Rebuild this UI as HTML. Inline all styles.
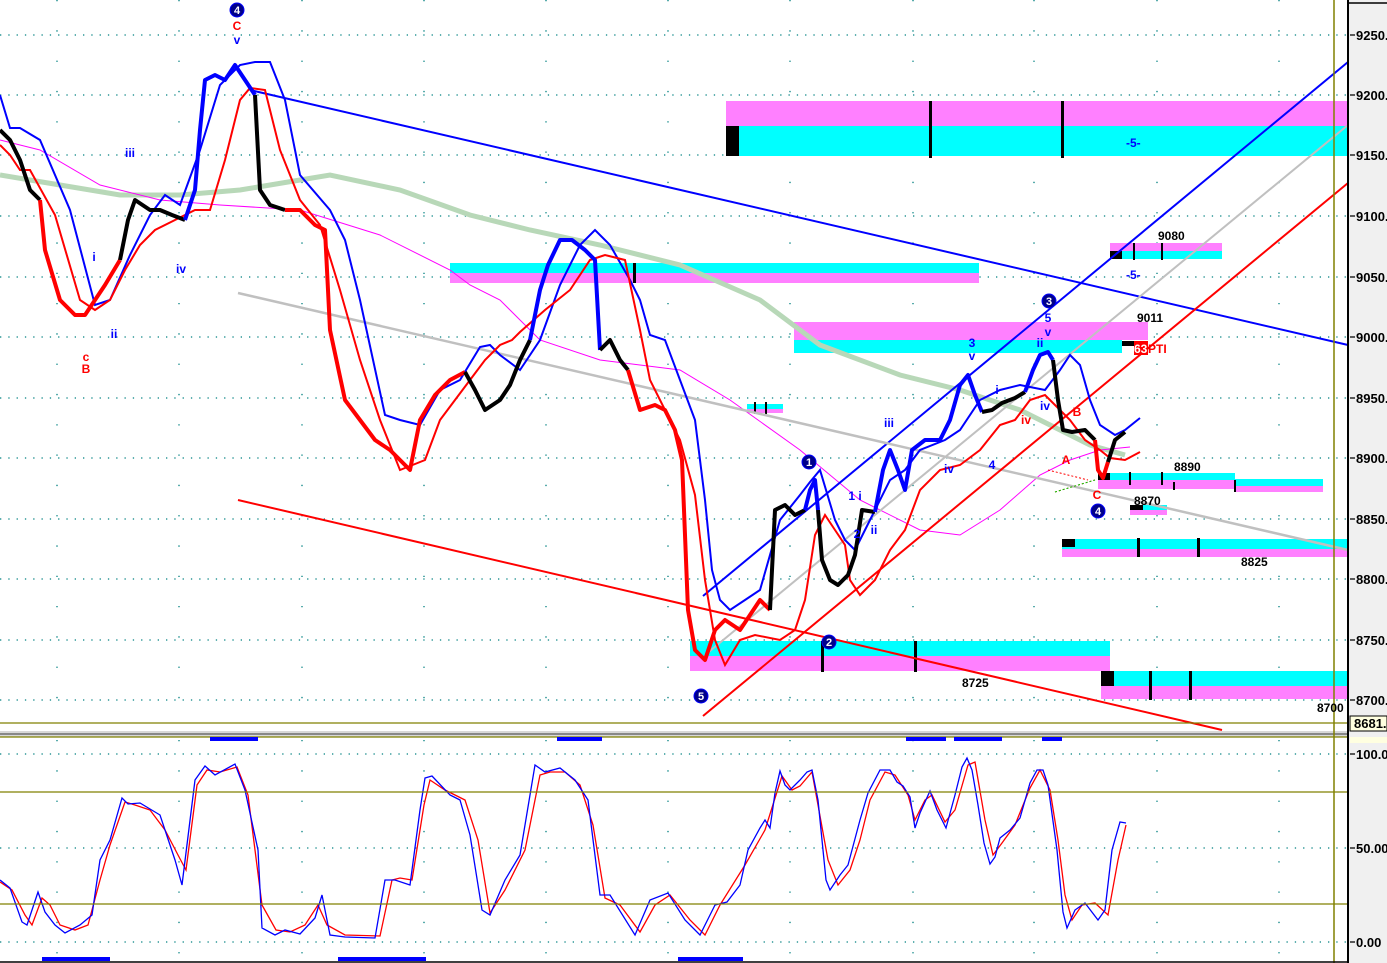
<!DOCTYPE html>
<html><head><meta charset="utf-8"><style>
html,body{margin:0;padding:0;background:#fff;}
svg{display:block;}
text{font-family:"Liberation Sans",Arial,sans-serif;font-weight:bold;}
</style></head><body>
<svg width="1387" height="963" viewBox="0 0 1387 963" xmlns="http://www.w3.org/2000/svg">
<rect width="1387" height="963" fill="#fff"/>
<!-- grid -->
<g stroke="#008080" stroke-width="1.3" stroke-dasharray="1.3 7">
<path d="M0 35H1348M0 95H1348M0 155H1348M0 216H1348M0 277H1348M0 337H1348M0 398H1348M0 458H1348M0 519H1348M0 579H1348M0 640H1348M0 700H1348"/>
<path d="M0 754H1348M0 848H1348M0 942H1348"/>
<path d="M57 0V723M179 0V723M302 0V723M424 0V723M546 0V723M668 0V723M790 0V723M913 0V723M1034 0V723M1157 0V723M1279 0V723" stroke-dasharray="1.3 29"/>
<path d="M57 740V962M179 740V962M302 740V962M424 740V962M546 740V962M668 740V962M790 740V962M913 740V962M1034 740V962M1157 740V962M1279 740V962" stroke-dasharray="1.3 29"/>
</g>
<!-- zones -->
<rect x="726" y="101" width="622" height="25" fill="#ff80ff"/><rect x="726" y="126" width="622" height="30" fill="#00ffff"/>
<rect x="726" y="126" width="13" height="30" fill="#000"/>
<rect x="929" y="101" width="3" height="57" fill="#000"/><rect x="1061" y="101" width="3" height="57" fill="#000"/>
<text x="1126" y="147" font-size="12" fill="#00f" font-weight="normal">-5-</text>
<rect x="450" y="263" width="529" height="10" fill="#00ffff"/><rect x="450" y="273" width="529" height="10" fill="#ff80ff"/>
<rect x="633" y="263" width="3" height="20" fill="#000"/>
<rect x="794" y="322" width="354" height="18" fill="#ff80ff"/><rect x="794" y="340" width="328" height="13" fill="#00ffff"/>
<rect x="1122" y="341" width="13" height="5" fill="#000"/>
<rect x="1110" y="243" width="112" height="8" fill="#ff80ff"/><rect x="1110" y="251" width="112" height="8" fill="#00ffff"/>
<rect x="1110" y="251" width="12" height="8" fill="#000"/><rect x="1133" y="243" width="2" height="17" fill="#000"/><rect x="1161" y="243" width="2" height="17" fill="#000"/>
<rect x="747" y="404" width="36" height="5" fill="#00ffff"/><rect x="747" y="409" width="36" height="4" fill="#ff80ff"/>
<rect x="754" y="402" width="2" height="12" fill="#000"/><rect x="765" y="402" width="2" height="12" fill="#000"/>
<rect x="1098" y="473" width="137" height="7" fill="#00ffff"/><rect x="1098" y="480" width="137" height="9" fill="#ff80ff"/>
<rect x="1235" y="479" width="88" height="7" fill="#00ffff"/><rect x="1235" y="486" width="88" height="6" fill="#ff80ff"/>
<rect x="1098" y="473" width="12" height="7" fill="#000"/><rect x="1129" y="472" width="2" height="13" fill="#000"/><rect x="1161" y="472" width="2" height="13" fill="#000"/><rect x="1173" y="482" width="2" height="8" fill="#000"/><rect x="1234" y="480" width="2" height="12" fill="#000"/>
<rect x="1130" y="505" width="37" height="5" fill="#00ffff"/><rect x="1130" y="510" width="37" height="5" fill="#ff80ff"/><rect x="1130" y="505" width="13" height="5" fill="#000"/>
<rect x="1062" y="539" width="286" height="10" fill="#00ffff"/><rect x="1062" y="549" width="286" height="8" fill="#ff80ff"/><rect x="1062" y="539" width="13" height="8" fill="#000"/>
<rect x="1137" y="538" width="3" height="19" fill="#000"/><rect x="1197" y="538" width="3" height="19" fill="#000"/>
<rect x="690" y="641" width="420" height="15" fill="#00ffff"/><rect x="690" y="656" width="420" height="15" fill="#ff80ff"/>
<rect x="821" y="641" width="3" height="31" fill="#000"/><rect x="914" y="641" width="3" height="31" fill="#000"/>
<rect x="1101" y="671" width="247" height="15" fill="#00ffff"/><rect x="1101" y="686" width="247" height="13" fill="#ff80ff"/><rect x="1101" y="671" width="13" height="15" fill="#000"/>
<rect x="1149" y="671" width="3" height="29" fill="#000"/><rect x="1189" y="671" width="3" height="29" fill="#000"/>
<!-- MAs -->
<polyline fill="none" stroke="#b8d8b8" stroke-width="5" points="0,175 60,185 120,195 180,195 240,190 300,180 330,175 400,190 470,215 530,230 600,245 680,265 760,300 820,345 900,375 960,390 1020,410 1060,430 1090,445 1125,455"/>
<polyline fill="none" stroke="#ff00ff" stroke-width="1" points="0,140 40,150 100,185 160,200 220,205 300,210 380,235 450,270 470,285 500,300 540,340 600,360 680,370 730,400 800,450 860,500 920,530 960,535 1000,510 1040,475 1070,460 1100,450 1130,447"/>
<!-- trend lines -->
<line x1="250" y1="90" x2="1348" y2="345" stroke="#0000ff" stroke-width="2"/>
<line x1="703" y1="596" x2="1348" y2="62" stroke="#0000ff" stroke-width="2"/>
<line x1="238" y1="293" x2="1348" y2="550" stroke="#c0c0c0" stroke-width="2.5"/>
<line x1="705" y1="655" x2="1348" y2="125" stroke="#c0c0c0" stroke-width="2"/>
<line x1="238" y1="500" x2="1222" y2="730" stroke="#ff0000" stroke-width="2"/>
<line x1="703" y1="716" x2="1348" y2="183" stroke="#ff0000" stroke-width="2"/>
<!-- envelopes -->
<polyline fill="none" stroke="#0000ff" stroke-width="2" points="0,95 10,128 20,128 40,140 70,210 95,305 110,300 130,255 150,215 165,195 180,205 200,150 220,85 240,65 255,62 270,62 285,100 300,175 330,210 345,240 360,300 385,415 400,420 420,425 440,390 460,380 480,347 490,345 500,355 520,370 540,340 560,285 580,245 595,230 610,245 630,280 640,300 650,335 665,340 680,380 695,420 705,500 712,570 720,600 730,610 745,600 760,590 780,520 800,495 810,482 820,470 835,520 845,540 855,550 870,520 890,480 905,470 920,450 945,440 960,430 980,400 1000,390 1020,385 1045,390 1060,370 1070,355 1080,365 1090,400 1100,425 1115,435 1125,430 1140,418"/>
<polyline fill="none" stroke="#ff0000" stroke-width="2" points="0,145 10,155 20,170 30,170 55,215 80,300 95,310 110,300 125,270 140,245 155,230 175,220 195,210 210,210 225,160 240,100 250,88 265,90 280,150 300,200 320,225 340,290 360,360 380,420 400,470 425,460 440,420 455,400 470,380 485,360 500,345 512,340 520,332 545,310 570,290 590,260 605,255 625,260 640,330 650,380 670,420 680,440 695,495 705,580 715,640 725,665 740,640 755,635 780,640 795,630 805,600 815,535 825,515 835,530 845,545 850,580 860,595 875,580 890,550 905,530 920,490 940,470 960,465 980,450 1000,425 1015,420 1030,400 1045,395 1055,405 1070,420 1085,440 1100,450 1110,458 1125,460 1140,452"/>
<!-- price -->
<g fill="none" stroke-width="4" stroke-linejoin="round">
<polyline stroke="#000" points="0,130 10,140 20,160 30,190 40,200"/>
<polyline stroke="#f00" points="40,200 45,250 60,300 75,315 85,315 95,300 105,285 120,260"/>
<polyline stroke="#000" points="120,260 128,220 135,200 150,210 160,210 172,215 185,220"/>
<polyline stroke="#00f" points="185,220 195,190 200,130 205,80 215,75 225,80 235,65 245,80 255,95"/>
<polyline stroke="#000" points="255,95 260,190 270,205 285,210"/>
<polyline stroke="#f00" points="285,210 300,210 315,225 325,230 330,330 345,400 360,420 375,440 390,450 400,460 410,470 420,420 435,395 450,380 465,372"/>
<polyline stroke="#000" points="465,372 475,390 485,410 500,400 510,385 520,360 530,340"/>
<polyline stroke="#00f" points="530,340 540,290 548,265 560,240 572,240 585,250 595,260 600,350"/>
<polyline stroke="#000" points="600,350 610,340 620,360 628,370"/>
<polyline stroke="#f00" points="628,370 640,410 655,405 665,410 675,430 682,460 688,610 695,650 705,660 715,630 725,620 740,630 750,615 760,600 770,610"/>
<polyline stroke="#000" points="770,610 775,510 785,505 795,515 805,510"/>
<polyline stroke="#00f" points="805,510 810,490 815,480 818,510"/>
<polyline stroke="#000" points="818,510 822,560 830,580 838,585 848,575 855,555 862,510 875,512"/>
<polyline stroke="#00f" points="875,512 883,470 890,450 898,470 905,490 912,450 925,440 940,440 950,420 960,385 968,375 975,395 982,412"/>
<polyline stroke="#000" points="982,412 992,410 1002,403 1015,398 1025,392"/>
<polyline stroke="#00f" points="1025,392 1033,370 1040,355 1048,352 1053,360"/>
<polyline stroke="#000" points="1053,360 1058,400 1063,430 1072,432 1085,430 1095,440"/>
<polyline stroke="#f00" points="1095,440 1098,470 1103,478 1108,462"/>
<polyline stroke="#000" points="1108,462 1115,440 1125,432"/>
</g>
<!-- lower pane -->
<polyline fill="none" stroke="#ff0000" stroke-width="1.3" points="0,882 12,890 25,915 32,925 42,898 50,905 60,925 75,930 88,925 100,880 110,845 125,802 135,805 150,810 165,830 178,855 186,870 197,785 207,770 220,772 237,767 248,795 262,905 276,930 290,932 305,925 318,905 327,925 345,935 380,936 392,880 400,878 412,880 424,805 430,780 445,790 465,800 478,840 490,913 505,890 525,850 540,775 550,772 565,772 580,785 593,825 605,898 620,905 640,932 655,905 670,895 690,920 705,935 720,905 745,865 765,830 782,776 792,790 800,786 812,772 828,860 838,885 850,870 860,840 870,800 885,772 895,775 908,795 915,820 925,800 932,795 945,822 955,810 968,765 975,762 985,820 993,855 1002,843 1015,825 1030,788 1040,770 1050,790 1058,840 1065,895 1072,920 1082,905 1095,903 1108,915 1118,860 1126,825"/>
<polyline fill="none" stroke="#0000ff" stroke-width="1.3" points="0,880 10,888 22,922 27,925 38,892 45,912 55,925 65,933 80,925 92,915 100,860 110,840 122,798 128,804 140,803 160,815 175,860 182,885 195,780 205,766 215,775 235,764 245,790 258,850 262,928 275,935 285,930 300,934 315,918 322,895 330,935 345,937 375,938 385,880 395,880 410,885 420,810 425,778 432,776 450,795 460,800 470,835 482,910 490,915 505,880 520,855 535,765 545,772 560,768 575,780 588,800 600,895 610,895 635,935 650,900 668,893 685,920 700,935 715,905 727,902 740,885 748,850 760,828 765,820 770,828 775,793 780,771 785,785 790,790 800,780 807,772 812,770 818,800 826,880 830,890 840,875 848,865 860,820 868,793 880,770 890,770 897,782 903,786 910,797 915,828 920,813 930,791 937,810 946,828 955,795 962,767 967,758 972,770 978,805 984,843 990,864 995,857 1000,838 1010,830 1020,818 1030,783 1037,770 1043,770 1048,785 1057,850 1063,912 1067,928 1075,910 1085,903 1098,920 1105,910 1112,850 1120,822 1126,823"/>
<line x1="0" y1="792" x2="1348" y2="792" stroke="#808000" stroke-width="1.3"/>
<line x1="0" y1="904" x2="1348" y2="904" stroke="#808000" stroke-width="1.3"/>
<line x1="0" y1="723" x2="1348" y2="723" stroke="#808000" stroke-width="1.3"/>
<rect x="0" y="731" width="1387" height="6" fill="#d8d8d8"/><rect x="0" y="733" width="1387" height="2" fill="#888"/>
<line x1="0" y1="737" x2="1348" y2="737" stroke="#808000" stroke-width="1.3"/>
<line x1="1334" y1="0" x2="1334" y2="963" stroke="#808000" stroke-width="1.5"/>
<g fill="#0000ff">
<rect x="210" y="737" width="48" height="4"/><rect x="557" y="737" width="45" height="4"/><rect x="906" y="737" width="40" height="4"/><rect x="954" y="737" width="48" height="4"/><rect x="1042" y="737" width="20" height="4"/>
<rect x="42" y="957" width="68" height="4"/><rect x="338" y="957" width="88" height="4"/><rect x="678" y="957" width="65" height="4"/>
</g>
<line x1="0" y1="962" x2="1348" y2="962" stroke="#000" stroke-width="1.5"/>
<!-- axis -->
<rect x="1349" y="0" width="38" height="963" fill="#f0f0f0"/>
<line x1="1348" y1="0" x2="1348" y2="963" stroke="#000" stroke-width="2"/>
<line x1="1348" y1="3" x2="1387" y2="3" stroke="#000" stroke-width="1.5"/>
<g stroke="#000" stroke-width="1.3">
<path d="M1350 35h5M1350 95h5M1350 155h5M1350 216h5M1350 277h5M1350 337h5M1350 398h5M1350 458h5M1350 519h5M1350 579h5M1350 640h5M1350 700h5M1350 754h5M1350 848h5M1350 942h5"/>
</g>
<g font-size="13" fill="#000">
<text x="1356" y="40">9250.</text><text x="1356" y="100">9200.</text><text x="1356" y="160">9150.</text><text x="1356" y="221">9100.</text><text x="1356" y="282">9050.</text><text x="1356" y="342">9000.</text><text x="1356" y="403">8950.</text><text x="1356" y="463">8900.</text><text x="1356" y="524">8850.</text><text x="1356" y="584">8800.</text><text x="1356" y="645">8750.</text><text x="1356" y="705">8700.</text>
<text x="1356" y="759">100.0</text><text x="1356" y="853">50.00</text><text x="1356" y="947">0.00</text>
</g>
<rect x="1350" y="716" width="37" height="15" fill="#ffffe0" stroke="#000" stroke-width="1"/>
<text x="1354" y="728" font-size="13">8681.</text>
<rect x="1350" y="737" width="37" height="6" fill="#ffffe0"/>
<!-- labels -->
<g font-size="12" fill="#000">
<text x="1137" y="322">9011</text><text x="1158" y="240">9080</text><text x="1174" y="471">8890</text><text x="1134" y="505">8870</text><text x="1241" y="566">8825</text><text x="962" y="687">8725</text><text x="1317" y="712">8700</text>
</g>
<rect x="1134" y="341" width="14" height="14" fill="#f00"/>
<text x="1134" y="353" font-size="12" fill="#fff">63</text><text x="1148" y="353" font-size="12" fill="#f00">PTI</text>
<text x="1126" y="279" font-size="12" fill="#00f" font-weight="normal">-5-</text>
<g fill="#00008b" stroke="#00f" stroke-width="1">
<circle cx="237" cy="10" r="7"/><circle cx="809" cy="462" r="7"/><circle cx="829" cy="642" r="7"/><circle cx="701" cy="696" r="7"/><circle cx="1049" cy="301" r="7"/><circle cx="1098" cy="511" r="7"/>
</g>
<g font-size="11" fill="#fff" text-anchor="middle">
<text x="237" y="14">4</text><text x="809" y="466">1</text><text x="829" y="646">2</text><text x="701" y="700">5</text><text x="1049" y="305">3</text><text x="1098" y="515">4</text>
</g>
<g font-size="12" fill="#00f" text-anchor="middle">
<text x="237" y="44">v</text><text x="130" y="157">iii</text><text x="94" y="261">i</text><text x="114" y="338">ii</text><text x="181" y="273">iv</text>
<text x="889" y="427">iii</text><text x="949" y="473">iv</text><text x="855" y="500">1 i</text><text x="857" y="538">2</text><text x="874" y="534">ii</text>
<text x="972" y="347">3</text><text x="972" y="360">v</text><text x="992" y="469">4</text><text x="997" y="394">i</text><text x="1040" y="347">ii</text><text x="1048" y="322">5</text><text x="1048" y="336">v</text><text x="1045" y="410">iv</text>
</g>
<g font-size="12" fill="#f00" text-anchor="middle">
<text x="237" y="30">C</text><text x="86" y="361">c</text><text x="86" y="373">B</text>
<text x="1026" y="424">iv</text><text x="1066" y="464">A</text><text x="1077" y="416">B</text><text x="1097" y="499">C</text>
</g>
<path d="M1048 470l40 10M1055 492l40 -12" stroke="#f00" stroke-width="1" stroke-dasharray="2 2"/>
<path d="M1055 492l40 -12" stroke="#0c0" stroke-width="1" stroke-dasharray="2 2"/>
</svg>
</body></html>
